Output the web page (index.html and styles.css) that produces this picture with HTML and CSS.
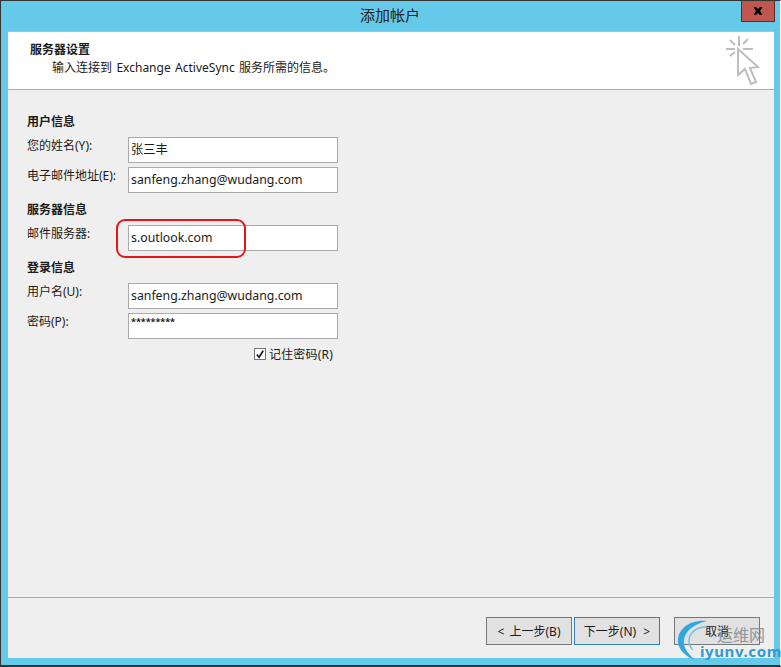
FILE: index.html
```html
<!DOCTYPE html>
<html lang="zh-CN">
<head>
<meta charset="utf-8">
<title>添加帐户</title>
<link rel="stylesheet" href="styles.css">
</head>
<body>
<div class="window">
  <div class="titlebar">
    <span class="title">添加帐户</span>
    <div class="close"><svg width="10" height="8" viewBox="0 0 10 8"><path d="M1 0h2l2 2 2-2h2v1L7 4l2 3v1H7L5 6 3 8H1V7l2-3-2-3z" fill="#000"/></svg></div>
  </div>
  <div class="client">
    <header class="head">
      <div class="head-text">
        <div class="head-title">服务器设置</div>
        <div class="head-sub">输入连接到 Exchange ActiveSync 服务所需的信息。</div>
      </div>
      <svg class="head-icon" width="34" height="52" viewBox="0 0 34 52" fill="none" stroke="#bdbdbd" stroke-width="2">
        <path d="M13 2v10M0 15h9M17 15h10M4 6l5 5M22 5l-5 5M4 22l5-4"/>
        <path d="M12 15v26l7-6 6 15 5-2-6-14 8-1z" fill="#fff"/>
      </svg>
    </header>
    <main class="form">
      <h2 class="section">用户信息</h2>
      <div class="row"><label class="label">您的姓名(Y):</label><div class="input">张三丰</div></div>
      <div class="row"><label class="label">电子邮件地址(E):</label><div class="input">sanfeng.zhang@wudang.com</div></div>
      <h2 class="section">服务器信息</h2>
      <div class="row"><label class="label">邮件服务器:</label><div class="input">s.outlook.com</div></div>
      <h2 class="section">登录信息</h2>
      <div class="row"><label class="label">用户名(U):</label><div class="input">sanfeng.zhang@wudang.com</div></div>
      <div class="row"><label class="label">密码(P):</label><div class="input pw">*********</div></div>
      <div class="remember">
        <span class="check"><svg width="11" height="11" viewBox="0 0 11 11"><path d="M2 5.5l2.5 3L9 1.5" fill="none" stroke="#222" stroke-width="2"/></svg></span>
        <span class="remember-text">记住密码(R)</span>
      </div>
    </main>
    <footer class="foot">
      <button class="btn">&lt; 上一步(B)</button>
      <button class="btn primary">下一步(N) &gt;</button>
      <button class="btn cancel">取消</button>
    </footer>
  </div>
  <div class="callout"></div>
  <div class="watermark">
    <svg class="wm-arc" width="40" height="44" viewBox="0 0 40 44">
      <path d="M30 1C12-1 0 10 1 22c1 8 7 14 17 18-8-7-12-13-11-20C8 11 17 4 30 1z" fill="#2fa8e0"/>
      <path d="M30 7c-10-1-18 6-18 14 0 4 2 7 4 9" fill="none" stroke="#6fc0e8" stroke-width="1.5"/>
    </svg>
    <span class="wm-cn">运维网</span>
    <span class="wm-en">iyunv.com</span>
  </div>
</div>
</body>
</html>
```
FILE: styles.css
```css
* { box-sizing: border-box; }
html, body { margin: 0; padding: 0; }
body { width: 781px; height: 667px; overflow: hidden; background: #fff; font-family: "Noto Sans", "Noto Sans CJK SC", sans-serif; font-size: 12px; color: #1a1a1a; }
.window { position: relative; width: 781px; height: 667px; background: #65c9ea; border-top: 1px solid #333; border-left: 1px solid #333; border-bottom: 2px solid #333; border-right: 1px solid #fff; padding: 0 7px 7px 7px; display: flex; flex-direction: column; }
.titlebar { height: 30px; flex: none; position: relative; display: flex; justify-content: center; align-items: center; margin-right: -1px; }
.title { font-size: 15px; color: #222; padding-bottom: 3px; padding-right: 2px; }
.close { position: absolute; right: -1px; top: 0; width: 34px; height: 21px; background: #c0574f; border: 1px solid #5c2a28; border-top: 0; display: flex; align-items: center; justify-content: center; }
.client { flex: 1; background: #efefef; display: flex; flex-direction: column; margin-right: -1px; border-top: 1px solid #9fc3d0; }
.head { height: 58px; flex: none; background: #fff; border-bottom: 1px solid #aaa; display: flex; justify-content: space-between; padding: 4px 14px 0 22px; }
.head-title { font-weight: 700; font-size: 12px; line-height: 18px; margin-top: 5px; }
.head-sub { font-size: 12px; line-height: 17px; padding-left: 22px; word-spacing: 1.3px; }
.head-icon { margin-top: -2px; }
.form { flex: 1; padding: 22px 0 0 19px; }
.section { margin: 7px 0 7px; font-size: 12px; font-weight: 700; line-height: 20px; height: 18px; }
.form > .section:first-child { margin-top: 0; }
.row { display: flex; height: 26px; margin-bottom: 4px; }
.label { width: 101px; flex: none; line-height: 17px; }
.input { width: 210px; height: 26px; background: #fff; border: 1px solid #aaa; padding: 0 2px; font-size: 12.3px; line-height: 23px; }
.input.pw { font-size: 9px; font-weight: 700; line-height: 16px; }
.remember { width: 311px; display: flex; justify-content: flex-end; align-items: center; gap: 3px; height: 16px; margin-top: 7px; padding-right: 5px; }
.remember-text { letter-spacing: .2px; }
.check { width: 12px; height: 12px; background: #fff; border: 1px solid #777; display: flex; align-items: center; justify-content: center; }
.foot { height: 61px; flex: none; border-top: 1px solid #aaa; display: flex; padding: 19px 14px 0 0; justify-content: flex-end; align-items: flex-start; gap: 2px; }
.btn { width: 86px; height: 28px; background: #e1e1e1; border: 1px solid #777; font: inherit; color: #1a1a1a; padding: 0; word-spacing: 2px; }
.btn.primary { border-color: #2f7fb5; word-spacing: 4px; }
.btn.cancel { margin-left: 12px; }
.callout { position: absolute; left: 115px; top: 218px; width: 130px; height: 39px; border: 2px solid #e8141c; border-radius: 9px; }
.watermark { position: absolute; left: 676px; top: 619px; width: 100px; height: 46px; }
.wm-arc { position: absolute; left: 0; top: 0; }
.wm-cn { position: absolute; left: 40px; top: 2px; font-size: 16px; color: #808a8e; opacity: .85; }
.wm-en { position: absolute; left: 23px; top: 22px; font-size: 15px; font-weight: 700; color: #2f9ad6; letter-spacing: .6px; line-height: 18px; }
```
